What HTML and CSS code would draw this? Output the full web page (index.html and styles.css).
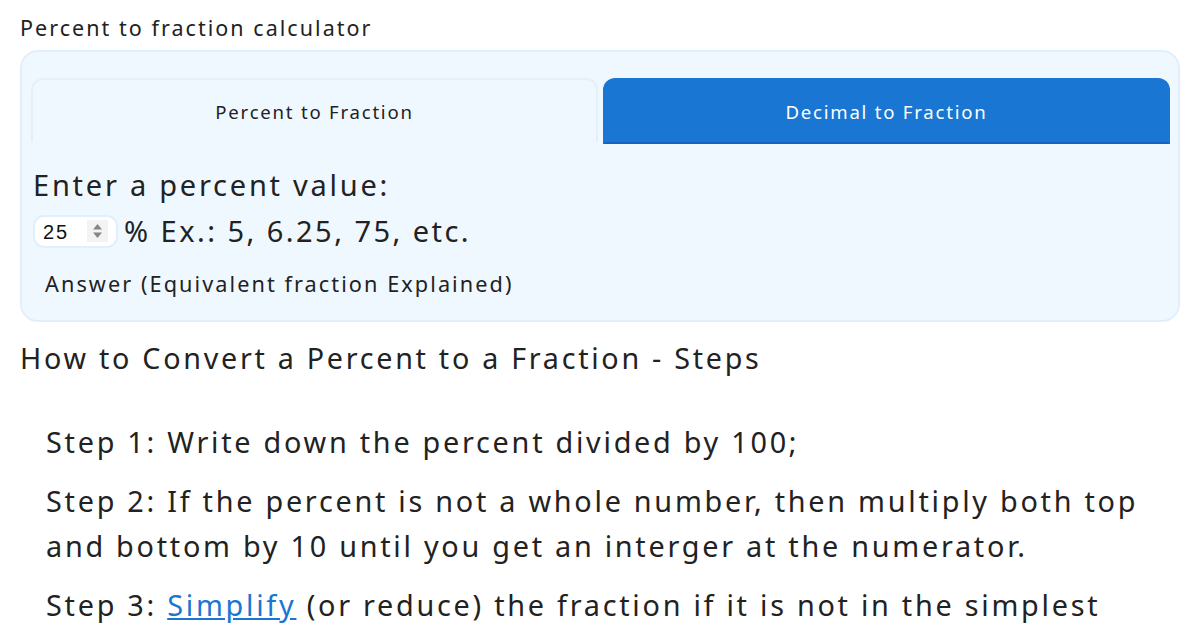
FILE: index.html
```html
<!DOCTYPE html>
<html>

<head>
    <title>Percent to fraction calculator</title>
    <link rel="stylesheet" href="styles.css">
</head>

<body>
    <div class="page">
        <h1 class="page-title">Percent to fraction calculator</h1>

        <div class="calc-box">
            <div class="tabs">
                <div class="tab">Percent to Fraction</div>
                <div class="tab tab-active">Decimal to Fraction</div>
            </div>

            <div class="calc-body">
                <label class="enter-label" for="percentInput">Enter a percent value:</label>
                <div class="input-row">
                    <div class="number-field">
                        <input id="percentInput" class="percent-input" type="text" value="25">
                        <span class="spinner">
                            <svg width="11" height="18" viewBox="0 0 11 18">
                                <path d="M1 7.5 L5.5 2 L10 7.5 Z" fill="#858585"/>
                                <path d="M1 10.5 L5.5 16 L10 10.5 Z" fill="#858585"/>
                            </svg>
                        </span>
                    </div>
                    <span class="example">% Ex.: 5, 6.25, 75, etc.</span>
                </div>
                <p class="answer">Answer (Equivalent fraction Explained)</p>
            </div>
        </div>

        <h2 class="steps-title">How to Convert a Percent to a Fraction - Steps</h2>

        <div class="steps">
            <p>Step 1: Write down the percent divided by 100;</p>
            <p>Step 2: If the percent is not a whole number, then multiply both top and bottom by 10 until you get an interger at the numerator.</p>
            <p>Step 3: <a href="#">Simplify</a> (or reduce) the fraction if it is not in the simplest form.</p>
        </div>
    </div>
</body>

</html>
```

FILE: styles.css
```css
/* Percent to fraction calculator */
body {
    background-color: #ffffff;
    font-family: "Noto Sans", sans-serif;
    color: #222222;
    margin: 0;
    padding: 0;
}

/* the text on this page is set a little wide */
.page-title,
.tab,
.enter-label,
.answer,
.steps-title,
.steps p {
    letter-spacing: 0.095em;
}

.page {
    padding: 10px 20px 0 20px;
}

.page-title {
    font-size: 21.5px;
    font-weight: normal;
    line-height: 36px;
    margin: 0 0 4px 0;
}

.calc-box {
    background-color: #f0f8ff;
    border: 2px solid #e1effc;
    border-radius: 18px;
    padding: 26px 8px 18px 9px;
}

.tabs {
    display: flex;
    gap: 5px;
}

.tab {
    flex: 1;
    height: 62px;
    display: flex;
    align-items: center;
    justify-content: center;
    font-size: 18.6px;
    border: 2px solid #e3f0fb;
    border-bottom: none;
    border-radius: 12px 12px 0 0;
}

.tab-active {
    background-color: #1976d2;
    border-color: #1976d2;
    border-bottom: 2px solid #1565c0;
    color: #ffffff;
}

.calc-body {
    padding: 21px 0 0 2px;
}

.enter-label {
    display: block;
    font-size: 29px;
    line-height: 40px;
}

.input-row {
    display: flex;
    align-items: center;
    gap: 6px;
    height: 40px;
    margin-top: 6px;
}

.number-field {
    display: flex;
    align-items: center;
    width: 81px;
    height: 29px;
    border: 2px solid #e1effc;
    border-radius: 11px;
    background-color: #ffffff;
}

.percent-input {
    width: 44px;
    border: none;
    outline: none;
    background: transparent;
    padding: 2px 0 0 8px;
    font-family: "Liberation Sans", Arial, sans-serif;
    font-size: 20px;
    letter-spacing: 0.1em;
    color: #111111;
}

.spinner {
    display: flex;
    align-items: center;
    justify-content: center;
    width: 21px;
    height: 22px;
    background-color: #f3f3f3;
}

.example {
    font-size: 29px;
    letter-spacing: 0.085em;
    line-height: 40px;
}

.answer {
    font-size: 21.7px;
    line-height: 36px;
    margin: 15px 0 0 12px;
}

.steps-title {
    font-size: 28.7px;
    font-weight: normal;
    line-height: 46px;
    margin: 13px 0 0 0;
}

.steps {
    padding: 38px 0 0 26px;
}

.steps p {
    font-size: 28.8px;
    line-height: 45px;
    margin: 0 0 14px 0;
}

.steps a {
    color: #1976d2;
}
```
